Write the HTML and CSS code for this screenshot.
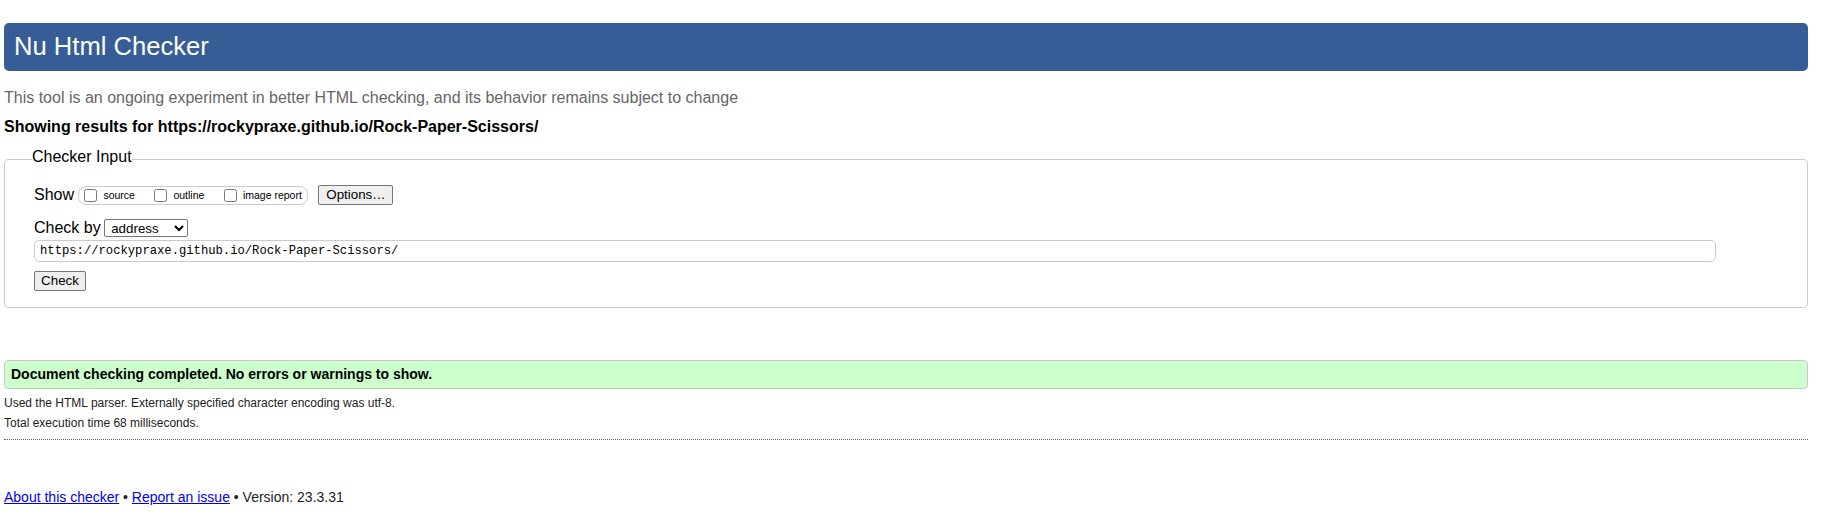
FILE: index.html
```html
<!DOCTYPE html>
<html lang="en">
<head>
<meta charset="utf-8">
<title>Showing results for https://rockypraxe.github.io/Rock-Paper-Scissors/ - Nu Html Checker</title>
<link rel="stylesheet" href="styles.css">
</head>
<body>
<h1 class="title">Nu Html Checker</h1>
<p class="intro">This tool is an ongoing experiment in better HTML checking, and its behavior remains subject to change</p>
<p class="showing">Showing results for https://rockypraxe.github.io/Rock-Paper-Scissors/</p>

<form class="checker-form">
  <fieldset class="checker-input">
    <legend class="checker-legend">Checker Input</legend>
    <div class="row row-show">
      <span class="row-label">Show</span>
      <span class="show-group">
        <label class="show-opt"><input type="checkbox" class="cb"><span>source</span></label>
        <label class="show-opt"><input type="checkbox" class="cb"><span>outline</span></label>
        <label class="show-opt"><input type="checkbox" class="cb"><span>image report</span></label>
      </span>
      <button type="button" class="btn btn-options">Options…</button>
    </div>
    <div class="row row-checkby">
      <span class="row-label">Check by</span>
      <select class="sel">
        <option>address</option>
        <option>file upload</option>
        <option>text input</option>
      </select>
    </div>
    <div class="row row-url">
      <input type="url" class="url" value="https://rockypraxe.github.io/Rock-Paper-Scissors/">
    </div>
    <div class="row row-submit">
      <button type="button" class="btn btn-check">Check</button>
    </div>
  </fieldset>
</form>

<p class="success">Document checking completed. No errors or warnings to show.</p>
<p class="details">Used the HTML parser. Externally specified character encoding was utf-8.</p>
<p class="details">Total execution time 68 milliseconds.</p>
<hr class="sep">
<p class="footer"><a href="#">About this checker</a> • <a href="#">Report an issue</a> • Version: 23.3.31</p>
</body>
</html>
```

FILE: styles.css
```css
html, body {
  background: #fff;
}
body {
  margin: 0 15px 0 4px;
  font-family: "Liberation Sans", Arial, sans-serif;
  color: #000;
}

.title {
  margin: 23px 0 0;
  padding: 8px 10px 10px;
  line-height: 30px;
  font-size: 25.6px;
  font-weight: normal;
  color: #fff;
  background: #365d95;
  border-radius: 5px;
}

.intro {
  margin: 17.5px 0 0;
  font-size: 16px;
  line-height: 18px;
  color: #666;
}

.showing {
  margin: 11px 0 0;
  font-size: 16px;
  line-height: 18px;
  font-weight: bold;
}

.checker-form {
  margin: 12.8px 0 0;
}

.checker-input {
  margin: 0;
  padding: 14px 29px 16.7px;
  border: 1px solid #ccc;
  border-radius: 4px;
  min-width: 0;
}

.checker-legend {
  margin-left: -2px;
  padding: 0 0 5px;
  font-size: 16px;
  line-height: 18px;
  color: #000;
}

.row {
  display: flex;
  align-items: center;
}
.row-label {
  font-size: 16px;
  line-height: 18px;
}

.row-show {
  height: 20px;
}
.show-group {
  display: inline-flex;
  align-items: center;
  box-sizing: border-box;
  height: 19px;
  margin-left: 4.4px;
  padding: 0 5px 0 1px;
  border: 1px solid #ccc;
  border-radius: 8px;
}
.show-opt {
  display: inline-flex;
  align-items: center;
  font-size: 10.5px;
  line-height: 12px;
}
.show-opt + .show-opt {
  margin-left: 15.5px;
}
.cb {
  width: 13px;
  height: 13px;
  margin: 0 6px 0 4px;
}

.btn {
  font-family: "Liberation Sans", Arial, sans-serif;
  font-size: 13.333px;
  line-height: 16px;
  height: 20px;
  padding: 0 6px;
  color: #000;
  background: #efefef;
  border: 1px solid #767676;
  border-radius: 2px;
}
.btn-options {
  margin-left: 10.6px;
  width: 75px;
}

.row-checkby {
  height: 20px;
  margin-top: 13.2px;
}
.sel {
  margin-left: 3.5px;
  width: 84px;
  height: 18px;
  padding: 0 0 0 2px;
  font-family: "Liberation Sans", Arial, sans-serif;
  font-size: 13.333px;
  color: #000;
  background: #fff;
  border: 1px solid #767676;
  border-radius: 2px;
}

.row-url {
  margin-top: 1.5px;
}
.url {
  box-sizing: border-box;
  width: calc(100% - 62px);
  height: 22px;
  margin: 0;
  padding: 0 5px;
  font-family: "Liberation Mono", "Courier New", monospace;
  font-size: 12.2px;
  color: #000;
  background: #fff;
  border: 1px solid #ccc;
  border-radius: 5px;
}

.row-submit {
  margin-top: 8.7px;
}
.btn-check {
  width: 52px;
}

.success {
  margin: 51.3px 0 0;
  padding: 0 6px;
  font-size: 14px;
  line-height: 27.4px;
  font-weight: bold;
  background: #ccffcc;
  border: 1px solid #c8c8c8;
  border-radius: 4px;
}

.details {
  margin: 6.7px 0 0;
  font-size: 12px;
  line-height: 14px;
  color: #222;
}

.sep {
  height: 0;
  margin: 8.9px 0 0;
  border: 0;
  border-top: 1px dotted #666;
}

.footer {
  margin: 48.8px 0 0;
  font-size: 14px;
  line-height: 16px;
  color: #222;
}
.footer a {
  color: #00e;
}
```
